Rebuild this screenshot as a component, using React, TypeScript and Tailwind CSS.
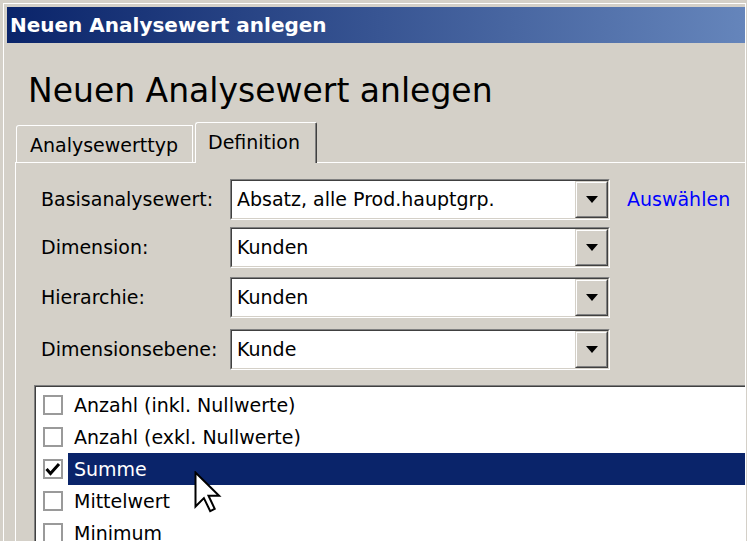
import React from "react";

const Arrow = () => (
  <svg width="12" height="7" viewBox="0 0 12 7">
    <polygon points="0,0 12,0 6,7" fill="#000" />
  </svg>
);

const Combo = ({ value }: { value: string }) => (
  <div className="w-[380px] h-[41px] border border-[#808080] border-b-white border-r-white">
    <div className="h-full border border-[#404040] border-b-[#d4d0c8] border-r-[#d4d0c8] bg-white flex items-stretch">
      <div className="flex-1 flex items-center pl-[5px] text-[19px] leading-none text-black whitespace-nowrap">
        {value}
      </div>
      <div className="w-[33px] border border-[#d4d0c8] border-b-[#404040] border-r-[#404040]">
        <div className="h-full border border-white border-b-[#808080] border-r-[#808080] bg-[#d4d0c8] flex items-center justify-center">
          <Arrow />
        </div>
      </div>
    </div>
  </div>
);

const Row = ({ label, value, mt, link }: { label: string; value: string; mt: string; link?: boolean }) => (
  <div className={`flex items-center h-[41px] ${mt}`}>
    <div className="w-[196px] pl-[7px] text-[19px] leading-none text-black whitespace-nowrap">{label}</div>
    <Combo value={value} />
    {link && <div className="ml-[17px] text-[19px] leading-none text-[#0000ff] whitespace-nowrap">Auswählen</div>}
  </div>
);

const Check = ({ checked }: { checked?: boolean }) => (
  <div className="w-[20px] h-[20px] border-2 border-[#9a9a9a] bg-white flex items-center justify-center shrink-0">
    {checked && (
      <svg width="16" height="16" viewBox="0 0 16 16">
        <polyline points="1.5,8 5.5,12.5 14,3" fill="none" stroke="#000" strokeWidth="3" />
      </svg>
    )}
  </div>
);

const Item = ({ text, checked, selected }: { text: string; checked?: boolean; selected?: boolean }) => (
  <div className="flex items-center h-[32px] pl-[7px]">
    <Check checked={checked} />
    <div
      className={`ml-[5px] flex-1 h-full flex items-center pl-[6px] text-[19px] leading-none whitespace-nowrap ${
        selected ? "bg-[#0a246a] text-white" : "text-black"
      }`}
    >
      {text}
    </div>
  </div>
);

export default function App() {
  return (
    <div className="relative w-[747px] h-[541px] overflow-hidden bg-[#d4d0c8] font-['DejaVu_Sans',sans-serif]">
      <div className="ml-[3px] mt-[3px] w-[743px] h-[600px] border-l border-t border-r border-white pl-[3px] pt-[3px] flex flex-col">
        {/* title bar */}
        <div className="h-[36px] shrink-0 flex items-center pl-[3px] bg-[linear-gradient(to_right,#0a246a,#6585bb)]">
          <span className="text-white font-bold text-[20px] leading-none whitespace-nowrap">Neuen Analysewert anlegen</span>
        </div>
        {/* heading */}
        <div className="mt-[28px] pl-[21px] text-[33px] leading-[40px] text-black whitespace-nowrap">
          Neuen Analysewert anlegen
        </div>
        {/* tabs */}
        <div className="mt-[11px] h-[40px] flex items-end pl-[9px]">
          <div className="w-[177px] h-[37px] border-t border-l border-r border-white rounded-tl-[3px] flex items-center pl-[13px] pt-[3px]">
            <span className="text-[19px] leading-none text-black whitespace-nowrap">Analysewerttyp</span>
          </div>
          <div className="relative z-10 ml-[2px] w-[122px] h-[41px] -mb-px bg-[#d4d0c8] border-t border-l border-white border-r border-r-[#404040] rounded-tl-[3px] rounded-tr-[2px]">
            <div className="h-full border-r border-[#808080] flex items-center pl-[12px] pb-[1px]">
              <span className="text-[19px] leading-none text-black whitespace-nowrap">Definition</span>
            </div>
          </div>
        </div>
        {/* panel */}
        <div className="ml-[8px] flex-1 border-t border-l border-white pt-[16px] pl-[18px] flex flex-col">
          <Row label="Basisanalysewert:" value="Absatz, alle Prod.hauptgrp." mt="" link />
          <Row label="Dimension:" value="Kunden" mt="mt-[7px]" />
          <Row label="Hierarchie:" value="Kunden" mt="mt-[9px]" />
          <Row label="Dimensionsebene:" value="Kunde" mt="mt-[11px]" />
          <div className="mt-[15px] h-[200px] border-t border-l border-[#808080]">
            <div className="h-full border-t border-l border-[#404040] bg-white pt-[2px]">
              <Item text="Anzahl (inkl. Nullwerte)" />
              <Item text="Anzahl (exkl. Nullwerte)" />
              <Item text="Summe" checked selected />
              <Item text="Mittelwert" />
              <Item text="Minimum" />
            </div>
          </div>
        </div>
      </div>
      {/* mouse cursor */}
      <svg className="absolute left-[194px] top-[471px]" width="28" height="44" viewBox="-1.5 -1.5 28 44">
        <polygon
          points="0,0 0,34 8.4,25.6 14.7,38.6 19.2,36.4 13,23.3 23.6,23.3"
          fill="#fff"
          stroke="#000"
          strokeWidth="2"
          strokeLinejoin="miter"
        />
      </svg>
    </div>
  );
}
